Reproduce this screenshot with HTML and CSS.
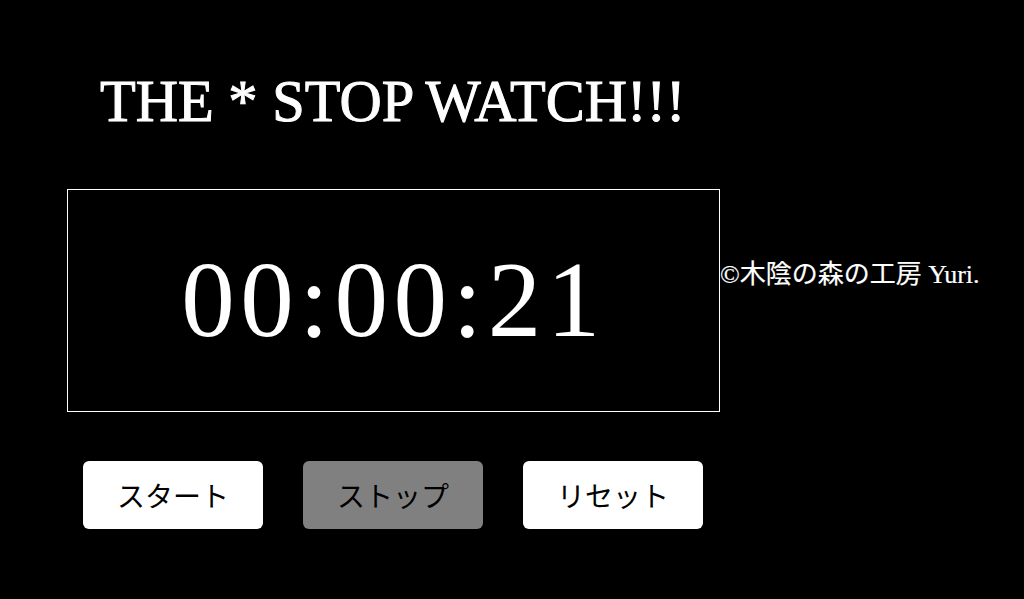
FILE: index.html
```html
<!DOCTYPE html>
<html lang="ja">
<head>
<meta charset="utf-8">
<link rel="stylesheet" href="styles.css">
</head>
<body>
<h1 class="title">THE * STOP WATCH!!!</h1>
<div class="row">
  <div class="display">00:00:21</div>
  <div class="credit">©木陰の森の工房 Yuri.</div>
</div>
<div class="buttons">
  <button class="btn">スタート</button>
  <button class="btn btn-off">ストップ</button>
  <button class="btn">リセット</button>
</div>
</body>
</html>
```
FILE: styles.css
```css
html, body {
  margin: 0;
  padding: 0;
  background: #000;
  color: #fff;
  height: 100%;
  overflow: hidden;
}
body {
  font-family: "Liberation Serif", "Noto Sans CJK JP", serif;
}
.title {
  margin: 0;
  padding: 67px 0 0 100px;
  font-size: 58.5px;
  font-weight: normal;
  -webkit-text-stroke: 1px #fff;
  line-height: 70px;
}
.row {
  display: flex;
  align-items: center;
  margin: 52px 0 0 67px;
}
.display {
  box-sizing: border-box;
  width: 653px;
  height: 223px;
  border: 1px solid #fff;
  display: flex;
  align-items: center;
  justify-content: center;
  font-size: 107px;
  letter-spacing: 5.5px;
  line-height: 1;
}
.credit {
  font-size: 26px;
  line-height: 30px;
  margin-top: -52px;
  white-space: nowrap;
  -webkit-text-stroke: 0.2px #fff;
}
.buttons {
  display: flex;
  gap: 40px;
  margin: 49px 0 0 83px;
}
.btn {
  width: 180px;
  height: 68px;
  border: none;
  border-radius: 6px;
  background: #fff;
  color: #000;
  font-family: "Noto Sans CJK JP", sans-serif;
  font-size: 28px;
  padding: 0;
}
.btn-off {
  background: #808080;
}
```
